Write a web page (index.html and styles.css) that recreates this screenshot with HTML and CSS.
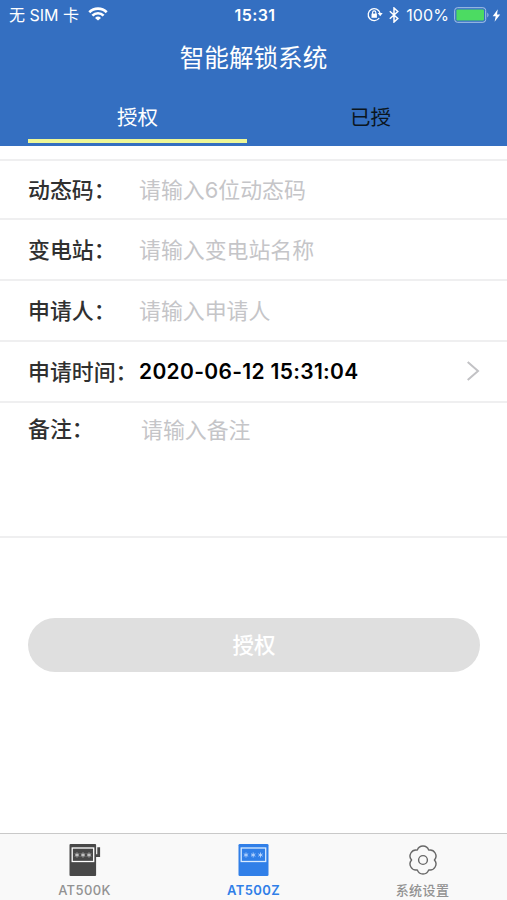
FILE: index.html
```html
<!DOCTYPE html>
<html lang="zh-CN">
<head>
<meta charset="utf-8">
<title>智能解锁系统</title>
<link rel="stylesheet" href="styles.css">
</head>
<body>
<div class="app">
  <header class="header">
    <div class="status">
      <div class="status-left">
        <span class="carrier">无 SIM 卡</span>
        <svg class="wifi" width="20" height="14" viewBox="0 0 20 14" fill="none" stroke="#fff" stroke-width="2.7"><path d="M1.300 5.200a12.400 12.400 0 0 1 17.400 0M4.400 8.600a7.900 7.900 0 0 1 11.200 0"/><path d="M10 13.600L7 10.900a4.300 4.300 0 0 1 6 0z" fill="#fff" stroke="none"/></svg>
      </div>
      <span class="clock">15:31</span>
      <div class="status-right">
        <svg class="lock" width="16" height="15" viewBox="0 0 16 15" fill="none" stroke="#fff" stroke-width="1.3"><path d="M12.200 11A6 6 0 1 1 13 6.200"/><path d="M10.700 6h5l-2.500 3.300z" fill="#fff" stroke="none"/><path d="M4.500 6.600h5.400v4.200H4.500z" fill="#fff" stroke="none"/><path d="M5.600 7V5.500a1.600 1.600 0 0 1 3.200 0V7" stroke-width="1.1"/></svg>
        <svg class="bluetooth" width="10" height="16" viewBox="0 0 10 16" fill="none" stroke="#fff" stroke-width="1.5"><path d="M.8 4.300l8 7.200L5 15V1l3.800 3.500-8 7.200"/></svg>
        <span class="percent">100%</span>
        <svg class="battery" width="36" height="16" viewBox="0 0 36 16"><rect x=".7" y=".7" width="31" height="14.600" rx="2.800" fill="none" stroke="#a9c4e8"/><rect x="2.400" y="2.400" width="27.600" height="11.200" rx="1" fill="#4cdb62"/><path d="M33.400 5.500q2.200 2.500 0 5z" fill="#a9c4e8"/></svg>
        <svg class="bolt" width="9" height="13" viewBox="0 0 9 13"><path d="M5.800.3L.7 7.200h3L2.600 12.700 8.200 5.500H5z" fill="#fff"/></svg>
      </div>
    </div>
    <h1 class="title">智能解锁系统</h1>
    <nav class="tabs">
      <div class="tab tab-active">授权</div>
      <div class="tab">已授</div>
    </nav>
  </header>

  <main class="form">
    <div class="row"><span class="label">动态码：</span><span class="hint">请输入6位动态码</span></div>
    <div class="row"><span class="label">变电站：</span><span class="hint">请输入变电站名称</span></div>
    <div class="row"><span class="label">申请人：</span><span class="hint">请输入申请人</span></div>
    <div class="row"><span class="label">申请时间：</span><span class="value">2020-06-12 15:31:04</span>
      <svg class="chevron" width="14" height="20" viewBox="0 0 14 20" fill="none" stroke="#c2c2c5" stroke-width="2"><path d="M1.700 1L12 10 1.700 19"/></svg>
    </div>
    <div class="row row-note"><span class="label">备注：</span><span class="hint">请输入备注</span></div>
  </main>

  <button class="submit">授权</button>

  <footer class="tabbar">
    <div class="item">
      <svg class="icon" width="32" height="34" viewBox="0 0 32 34"><path d="M1.500 1h24.600q1 0 1 1v30q0 1-1 1H1.500q-1 0-1-1V2q0-1 1-1z" fill="#484848"/><path d="M26.500 12.700h3.200V4.200" fill="none" stroke="#484848" stroke-width="2.800"/><rect x="3.200" y="5" width="21.500" height="13.500" fill="#484848" stroke="#fff" stroke-width="1.300"/><path d="M8 9.500v5M5.800 10.800l4.400 2.400M10.200 10.800l-4.400 2.400M14 9.500v5M11.800 10.800l4.400 2.400M16.200 10.800l-4.400 2.400M20 9.500v5M17.800 10.800l4.400 2.400M22.200 10.800l-4.400 2.400" stroke="#ddd" stroke-width=".8"/></svg>
      <span>AT500K</span>
    </div>
    <div class="item item-active">
      <svg class="icon" width="32" height="34" viewBox="0 0 32 34"><rect x=".5" y="1" width="30" height="32" rx="1.300" fill="#307fe8"/><rect x="3.200" y="5" width="24.500" height="13.500" fill="none" stroke="#d9ebff" stroke-width="1.300"/><path d="M8 9.500v5M5.800 10.800l4.400 2.400M10.200 10.800l-4.400 2.400M15.200 9.500v5M13 10.800l4.400 2.400M17.400 10.800l-4.400 2.400M22.500 9.500v5M20.300 10.800l4.400 2.400M24.700 10.800l-4.400 2.400" stroke="#c5ddff" stroke-width=".8"/></svg>
      <span>AT500Z</span>
    </div>
    <div class="item">
      <svg class="icon" width="32" height="34" viewBox="-16 -17 32 34" fill="none" stroke="#686868" stroke-width="1.400" stroke-linejoin="round"><path d="M11.400 0A6 6 0 0 0 5.700-9.870A6 6 0 0 0-5.700-9.870A6 6 0 0 0-11.400 0A6 6 0 0 0-5.700 9.870A6 6 0 0 0 5.700 9.870A6 6 0 0 0 11.400 0z"/><circle r="4.400"/></svg>
      <span>系统设置</span>
    </div>
  </footer>
</div>
</body>
</html>
```
FILE: styles.css
```css
* { box-sizing: border-box; }
body {
  margin: 0;
  background: #fff;
  font-family: Inter, "Noto Sans CJK SC", sans-serif;
}
.app {
  width: 507px;
  height: 900px;
  display: flex;
  flex-direction: column;
  overflow: hidden;
  white-space: nowrap;
}
.header {
  height: 146px;
  background: #346fc1;
  color: #fff;
  display: flex;
  flex-direction: column;
}
.status {
  height: 30px;
  padding: 0 6px 0 9px;
  display: grid;
  grid-template-columns: 1fr auto 1fr;
  align-items: center;
  font-size: 16px;
  line-height: 30px;
}
.status-left, .status-right { display: flex; align-items: center; }
.status-left { gap: 9px; }
.wifi { margin-top: -2px; }
.status-right { justify-content: flex-end; }
.carrier { font-size: 16px; }
.clock { font-weight: 600; letter-spacing: .4px; }
.percent { margin: 0 5px 0 7px; letter-spacing: .1px; }
.lock, .bluetooth { margin-top: -1px; }
.bluetooth { margin-left: 6px; }
.bolt { margin-left: 2px; }
.title {
  margin: 0;
  height: 54px;
  font-size: 24.600px;
  font-weight: 400;
  line-height: 56px;
  text-align: center;
}
.tabs {
  flex: 1;
  display: grid;
  grid-template-columns: 219px 219px;
  grid-template-rows: 55px;
  column-gap: 14px;
  padding: 4px 28px 3px;
}
.tab {
  height: 55px;
  font-size: 20.500px;
  line-height: 59px;
  text-align: center;
  color: #0b1520;
  border-bottom: 4px solid transparent;
}
.tab-active { color: #fff; border-color: #eef796; }
.form {
  margin-top: 13px;
  border-top: 2px solid #efeff0;
}
.row {
  height: 61px;
  display: flex;
  align-items: center;
  padding: 0 27px 3px 28px;
  border-bottom: 2px solid #efeff0;
  font-size: 21.900px;
}
.row:first-child { height: 59px; }
.label {
  width: 111px;
  color: #303030;
  font-weight: 500;
}
.hint { color: #c5c5c8; }
.value {
  color: #000;
  font-size: 21px;
  font-weight: 600;
  letter-spacing: .32px;
  padding-top: 2px;
}
.chevron { margin-left: auto; margin-top: 2px; }
.row-note {
  height: 135px;
  align-items: flex-start;
  padding-top: 9px;
}
.row-note .hint { padding: 1px 0 0 2px; }
.submit {
  margin: 80px 27px 0 28px;
  height: 54px;
  border: 0;
  border-radius: 27px;
  background: #dfdfdf;
  color: #fff;
  font: 500 21.500px/54px Inter, "Noto Sans CJK SC", sans-serif;
  padding: 0;
}
.tabbar {
  margin-top: auto;
  height: 67px;
  border-top: 1px solid #c9c9c9;
  background: #f9f9f9;
  display: grid;
  grid-template-columns: repeat(3, 1fr);
}
.item {
  display: flex;
  flex-direction: column;
  align-items: center;
  padding-top: 9px;
  color: #929292;
  font-size: 13px;
  font-weight: 500;
  line-height: 27px;
  letter-spacing: .4px;
}
.item-active { color: #307fe8; font-weight: 600; }
.icon { flex: none; }
```
